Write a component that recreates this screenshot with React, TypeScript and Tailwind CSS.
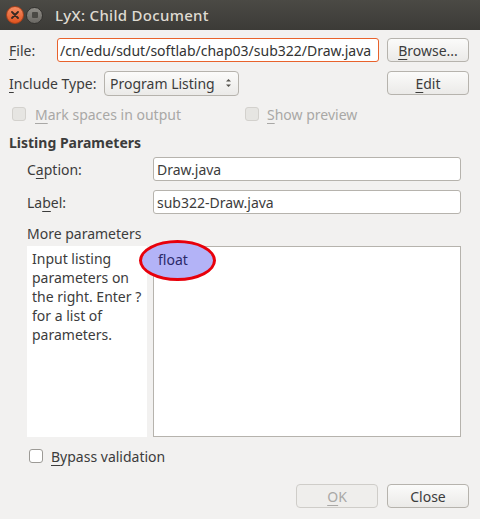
import { ReactNode } from 'react'

const font = { fontFamily: '"Noto Sans", "Open Sans", sans-serif' }

const U = ({ children }: { children: ReactNode }) => (
    <span className="underline decoration-1 underline-offset-[3px]">{children}</span>
)

const Button = ({ children, disabled }: { children: ReactNode; disabled?: boolean }) => (
    <div
        className={
            'flex h-[24px] w-[82px] items-center justify-center rounded-[4px] border text-[14px] ' +
            (disabled
                ? 'border-[#cfcdc9] bg-[#efeeec] text-[#a9a8a6]'
                : 'border-[#b6b3ad] bg-gradient-to-b from-[#fbfbfa] to-[#ebeae8] text-[#3c3c3c]')
        }
    >
        {children}
    </div>
)

const Checkbox = ({ disabled }: { disabled?: boolean }) => (
    <div
        className={
            'h-[14px] w-[14px] rounded-[3px] border ' +
            (disabled ? 'border-[#d3d1cd] bg-[#e6e5e2]' : 'border-[#9c9a96] bg-white')
        }
    />
)

export default function App() {
    return (
        <div className="h-[519px] w-[480px] overflow-hidden bg-[#f2f1f0] text-[14px] text-[#3c3c3c]" style={font}>
            {/* title bar */}
            <div className="flex h-[30px] items-center bg-gradient-to-b from-[#4b4a45] to-[#3c3b37] pl-[6px]">
                <div className="flex h-[18px] w-[18px] items-center justify-center rounded-full bg-gradient-to-b from-[#f58c62] to-[#e0531c] border border-[#a8401a]">
                    <svg width="8" height="8" viewBox="0 0 8 8">
                        <path d="M1 1L7 7M7 1L1 7" stroke="#3a2a22" strokeWidth="1.8" strokeLinecap="round" />
                    </svg>
                </div>
                <div className="ml-[2px] flex h-[17px] w-[17px] items-center justify-center rounded-full bg-gradient-to-b from-[#8e8c86] to-[#6b6964] border border-[#33322f]">
                    <div className="h-[6px] w-[6px] rounded-[1px] bg-[#4a4944]" />
                </div>
                <div className="ml-[12px] text-[15px] font-medium tracking-[0.3px] text-[#dfdbd2]">LyX: Child Document</div>
            </div>

            <div className="px-[9px]">
                {/* file row */}
                <div className="mt-[8px] flex h-[24px] items-center">
                    <div className="w-[48px]">
                        <U>F</U>ile:
                    </div>
                    <div className="flex h-[24px] w-[322px] items-center overflow-hidden whitespace-nowrap rounded-[3px] border border-[#e8622c] bg-white pl-[2px] text-[#333]">
                        /cn/edu/sdut/softlab/chap03/sub322/Draw.java
                    </div>
                    <div className="ml-[8px]">
                        <Button>
                            <U>B</U>rowse...
                        </Button>
                    </div>
                </div>

                {/* include type row */}
                <div className="mt-[9px] flex h-[24px] items-center">
                    <div className="w-[95px] whitespace-nowrap">
                        <U>I</U>nclude Type:
                    </div>
                    <div className="flex h-[25px] w-[135px] items-center justify-between rounded-[4px] border border-[#b6b3ad] bg-gradient-to-b from-[#fbfbfa] to-[#ebeae8] pl-[5px] pr-[6px]">
                        <span>Program Listing</span>
                        <svg width="7" height="12" viewBox="0 0 7 12">
                            <path d="M1 4.5L3.5 2L6 4.5Z" fill="#55524d" />
                            <path d="M1 7.5L3.5 10L6 7.5Z" fill="#55524d" />
                        </svg>
                    </div>
                    <div className="ml-auto mr-[2px]">
                        <Button>
                            <U>E</U>dit
                        </Button>
                    </div>
                </div>

                {/* option checkboxes */}
                <div className="mt-[11px] flex h-[16px] items-center text-[#a9a8a6]">
                    <div className="ml-[3px]">
                        <Checkbox disabled />
                    </div>
                    <div className="ml-[9px] w-[210px]">
                        <U>M</U>ark spaces in output
                    </div>
                    <Checkbox disabled />
                    <div className="ml-[8px]">
                        <U>S</U>how preview
                    </div>
                </div>

                <div className="mt-[10px] font-bold">Listing Parameters</div>

                <div className="pl-[18px] pr-[10px]">
                    <div className="mt-[4px] flex h-[24px] items-center">
                        <div className="w-[126px]">
                            C<U>a</U>ption:
                        </div>
                        <div className="flex h-[24px] flex-1 items-center rounded-[3px] border border-[#b6b3ad] bg-white pl-[3px]">
                            Draw.java
                        </div>
                    </div>
                    <div className="mt-[9px] flex h-[24px] items-center">
                        <div className="w-[126px]">
                            La<U>b</U>el:
                        </div>
                        <div className="flex h-[24px] flex-1 items-center rounded-[3px] border border-[#b6b3ad] bg-white pl-[3px]">
                            sub322-Draw.java
                        </div>
                    </div>
                    <div className="mt-[9px] h-[23px]">More parameters</div>

                    <div className="flex h-[191px] gap-[6px]">
                        <div className="w-[120px] bg-white pl-[5px] pt-[3px] leading-[19px]">
                            Input listing parameters on the right. Enter ? for a list of parameters.
                        </div>
                        <div className="relative flex-1 border border-[#b6b3ad] bg-white">
                            <div className="absolute left-[-15px] top-[-7px] h-[41px] w-[77px] rounded-[50%] border-[3px] border-[#e8000b] bg-[#b3b3f7]" />
                            <div className="relative pl-[4px] pt-[2px] text-[#2b2a6a]">float</div>
                        </div>
                    </div>
                </div>

                {/* bypass */}
                <div className="mt-[11px] flex h-[16px] items-center pl-[20px]">
                    <Checkbox />
                    <div className="ml-[8px]">
                        <U>B</U>ypass validation
                    </div>
                </div>

                <div className="mt-[20px] flex justify-end gap-[9px] pr-[2px]">
                    <Button disabled>
                        <U>O</U>K
                    </Button>
                    <Button>Close</Button>
                </div>
            </div>
        </div>
    )
}
